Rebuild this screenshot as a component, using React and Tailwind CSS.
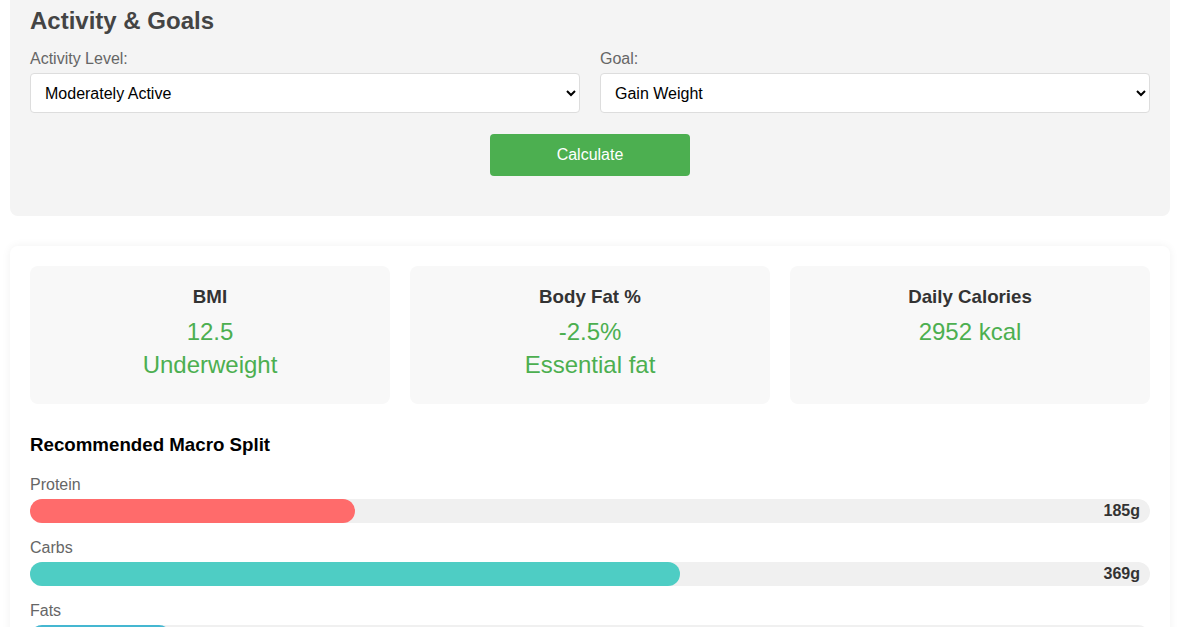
import { useState } from "react";

const stats = [
  { title: "BMI", lines: ["12.5", "Underweight"] },
  { title: "Body Fat %", lines: ["-2.5%", "Essential fat"] },
  { title: "Daily Calories", lines: ["2952 kcal"] },
];

const macros = [
  { name: "Protein", grams: 185, pct: 29, color: "bg-[#ff6b6b]" },
  { name: "Carbs", grams: 369, pct: 58, color: "bg-[#4ecdc4]" },
  { name: "Fats", grams: 82, pct: 12.6, color: "bg-[#45b7d1]" },
];

export default function App() {
  const [activity, setActivity] = useState("moderate");
  const [goal, setGoal] = useState("gain");

  return (
    <div className="h-[627px] overflow-hidden bg-white font-['Liberation_Sans',Arial,sans-serif] px-[10px]">
      {/* Activity panel (page is scrolled a little) */}
      <div className="-mt-[14px] w-[1160px] rounded-lg bg-[#f4f4f4] px-5 pt-5 pb-[40px]">
        <h2 className="text-[24px] leading-[30px] font-bold text-[#444]">
          Activity &amp; Goals
        </h2>

        <div className="mt-[14px] grid grid-cols-2 gap-5">
          <div>
            <label className="block text-[16px] leading-[18px] text-[#666] mb-[5px]">
              Activity Level:
            </label>
            <select
              value={activity}
              onChange={(e) => setActivity(e.target.value)}
              className="block w-full h-[40px] px-[10px] text-[16px] text-black bg-white border border-[#ddd] rounded"
            >
              <option value="sedentary">Sedentary</option>
              <option value="light">Lightly Active</option>
              <option value="moderate">Moderately Active</option>
              <option value="very">Very Active</option>
            </select>
          </div>
          <div>
            <label className="block text-[16px] leading-[18px] text-[#666] mb-[5px]">
              Goal:
            </label>
            <select
              value={goal}
              onChange={(e) => setGoal(e.target.value)}
              className="block w-full h-[40px] px-[10px] text-[16px] text-black bg-white border border-[#ddd] rounded"
            >
              <option value="lose">Lose Weight</option>
              <option value="maintain">Maintain Weight</option>
              <option value="gain">Gain Weight</option>
            </select>
          </div>
        </div>

        <button className="block mx-auto mt-[21px] w-[200px] h-[42px] rounded bg-[#4caf50] text-white text-[16px]">
          Calculate
        </button>
      </div>

      {/* Results panel */}
      <div className="mt-[30px] w-[1160px] rounded-lg bg-white p-5 shadow-[0_0_10px_rgba(0,0,0,0.06)]">
        <div className="grid grid-cols-3 gap-5">
          {stats.map((s) => (
            <div
              key={s.title}
              className="h-[138px] rounded-lg bg-[#f8f8f8] pt-5 text-center"
            >
              <h3 className="text-[18.72px] leading-[21px] font-bold text-[#333] mb-[8px]">
                {s.title}
              </h3>
              {s.lines.map((l) => (
                <p key={l} className="text-[24px] leading-[33px] text-[#4caf50]">
                  {l}
                </p>
              ))}
            </div>
          ))}
        </div>

        <h3 className="mt-[30px] text-[18.72px] leading-[21px] font-bold text-black">
          Recommended Macro Split
        </h3>

        <div className="mt-[21px] flex flex-col gap-[16px]">
          {macros.map((m) => (
            <div key={m.name}>
              <div className="text-[16px] leading-[18px] text-[#666] mb-[5px]">
                {m.name}
              </div>
              <div className="relative h-[24px] rounded-full bg-[#f0f0f0]">
                <div
                  className={`h-full rounded-full ${m.color}`}
                  style={{ width: `${m.pct}%` }}
                />
                <span className="absolute right-[10px] top-0 h-full flex items-center text-[16px] font-bold text-[#333]">
                  {m.grams}g
                </span>
              </div>
            </div>
          ))}
        </div>
      </div>
    </div>
  );
}
